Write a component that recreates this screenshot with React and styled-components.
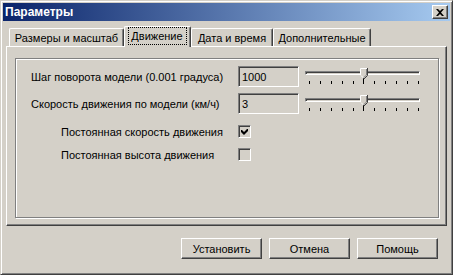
import styled, { createGlobalStyle } from "styled-components";

const GlobalStyle = createGlobalStyle`
  html, body {
    margin: 0;
    padding: 0;
    background: #d4d0c8;
  }
  * {
    box-sizing: border-box;
  }
`;

const SWindow = styled.div`
  width: 453px;
  height: 275px;
  padding: 2px;
  display: flex;
  flex-direction: column;
  background: #d4d0c8;
  border: 1px solid;
  border-color: #d4d0c8 #404040 #404040 #d4d0c8;
  box-shadow: inset 1px 1px 0 #ffffff, inset -1px -1px 0 #808080;
  font-family: "Liberation Sans", Arial, sans-serif;
  font-size: 11px;
  color: #000;
`;

const STitleBar = styled.div`
  height: 18px;
  display: flex;
  align-items: center;
  justify-content: space-between;
  padding: 0 2px 0 2px;
  background: linear-gradient(90deg, #0a246a 0%, #a6caf0 100%);
`;

const STitle = styled.span`
  color: #fff;
  font-weight: bold;
  font-size: 12px;
`;

const SCloseButton = styled.div`
  width: 16px;
  height: 14px;
  display: flex;
  align-items: center;
  justify-content: center;
  background: #d4d0c8;
  border: 1px solid;
  border-color: #ffffff #404040 #404040 #ffffff;
  box-shadow: inset -1px -1px 0 #808080;
`;

const SBody = styled.div`
  flex: 1;
  padding: 5px 3px 0 3px;
  display: flex;
  flex-direction: column;
`;

const STabStrip = styled.div`
  height: 20px;
  display: flex;
  align-items: flex-end;
  padding-left: 3px;
  position: relative;
  z-index: 1;
`;

const STab = styled.div`
  width: ${(p) => p.$w}px;
  height: ${(p) => (p.$active ? 21 : 18)}px;
  margin-bottom: ${(p) => (p.$active ? -1 : 0)}px;
  display: flex;
  align-items: center;
  justify-content: center;
  background: #d4d0c8;
  border-top: 1px solid #ffffff;
  border-left: 1px solid #ffffff;
  border-right: 1px solid #404040;
  border-radius: 2px 2px 0 0;
  box-shadow: inset -1px 0 0 #808080;
  white-space: nowrap;
  padding-bottom: ${(p) => (p.$active ? 2 : 0)}px;
`;

const SFocus = styled.span`
  outline: 1px dotted #000;
  padding: 2px 3px 2px 2px;
`;

const SPanel = styled.div`
  height: 180px;
  padding: 11px 7px 7px 8px;
  border: 1px solid;
  border-color: #ffffff #404040 #404040 #ffffff;
  box-shadow: inset -1px -1px 0 #808080;
  display: flex;
`;

const SGroup = styled.div`
  flex: 1;
  padding: 7px 0 0 15px;
  border: 1px solid #808080;
  box-shadow: inset 1px 1px 0 #ffffff, 1px 1px 0 #ffffff;
  display: flex;
  flex-direction: column;
`;

const SRow = styled.div`
  display: flex;
  align-items: ${(p) => (p.$top ? "flex-start" : "center")};
  height: ${(p) => p.$h}px;
  margin-top: ${(p) => p.$mt || 0}px;
`;

const SLabel = styled.div`
  width: 207px;
  padding-left: ${(p) => p.$indent || 0}px;
  white-space: nowrap;
  align-self: center;
`;

const SEdit = styled.div`
  width: 61px;
  height: 21px;
  padding: 2px 3px;
  display: flex;
  align-items: center;
  background: #d4d0c8;
  border: 1px solid;
  border-color: #808080 #ffffff #ffffff #808080;
  box-shadow: inset 1px 1px 0 #404040, inset -1px -1px 0 #d4d0c8;
`;

const SSlider = styled.div`
  width: 115px;
  height: 21px;
  margin-left: 6px;
  padding-top: 5px;
  position: relative;
  align-self: flex-start;
`;

const SChannel = styled.div`
  height: 4px;
  border: 1px solid;
  border-color: #808080 #ffffff #ffffff #808080;
  box-shadow: inset 1px 1px 0 #404040;
`;

const SThumb = styled.svg`
  position: absolute;
  left: 55px;
  top: 2px;
`;

const STicks = styled.div`
  display: flex;
  justify-content: space-between;
  align-items: flex-end;
  padding: 0 1px 0 4px;
  margin-top: 6px;
  height: 3px;
`;

const STick = styled.div`
  width: 1px;
  height: ${(p) => (p.$major ? 7 : 3)}px;
  background: #000;
`;

const SCheck = styled.div`
  width: 13px;
  height: 13px;
  display: flex;
  align-items: center;
  justify-content: center;
  background: #d4d0c8;
  border: 1px solid;
  border-color: #808080 #ffffff #ffffff #808080;
  box-shadow: inset 1px 1px 0 #404040, inset -1px -1px 0 #d4d0c8;
`;

const SFooter = styled.div`
  display: flex;
  justify-content: flex-end;
  gap: 7px;
  padding: 12px 9px 0 0;
`;

const SButton = styled.div`
  width: 81px;
  height: 21px;
  display: flex;
  align-items: center;
  justify-content: center;
  border: 1px solid;
  border-color: #ffffff #404040 #404040 #ffffff;
  box-shadow: inset -1px -1px 0 #808080;
`;

const tabs = [
  { title: "Размеры и масштаб", w: 115 },
  { title: "Движение", w: 67, active: true },
  { title: "Дата и время", w: 82 },
  { title: "Дополнительные", w: 98 },
];

const Slider = () => (
  <SSlider>
    <SChannel />
    <STicks>
      {Array.from({ length: 11 }).map((_, i) => (
        <STick key={i} $major={i === 5} />
      ))}
    </STicks>
    <SThumb width="8" height="11" viewBox="0 0 8 11">
      <polygon points="0,0 7,0 7,7 3.5,10.5 0,7" fill="#d4d0c8" />
      <polyline points="0.5,7 0.5,0.5 7,0.5" fill="none" stroke="#fff" />
      <polyline points="1,7.5 3.5,10" fill="none" stroke="#fff" />
      <polyline points="7.5,0 7.5,7.5 4,11" fill="none" stroke="#404040" />
      <polyline points="6.5,1 6.5,7 3.5,9.8" fill="none" stroke="#808080" />
    </SThumb>
  </SSlider>
);

const CheckMark = () => (
  <svg width="7" height="7" viewBox="0 0 7 7">
    <path d="M0 2h1l2 2 3-3h1v2L3 7 0 4z" fill="#000" />
  </svg>
);

const App = () => {
  return (
    <>
      <GlobalStyle />
      <SWindow>
        <STitleBar>
          <STitle>Параметры</STitle>
          <SCloseButton>
            <svg width="8" height="7" viewBox="0 0 8 7">
              <path d="M0 0h2l2 2 2-2h2L5 3.5 8 7H6L4 5 2 7H0l3-3.5z" fill="#000" />
            </svg>
          </SCloseButton>
        </STitleBar>
        <SBody>
          <STabStrip>
            {tabs.map((t) => (
              <STab key={t.title} $w={t.w} $active={t.active}>
                {t.active ? <SFocus>{t.title}</SFocus> : t.title}
              </STab>
            ))}
          </STabStrip>
          <SPanel>
            <SGroup>
              <SRow $h={21} $top>
                <SLabel>Шаг поворота модели (0.001 градуса)</SLabel>
                <SEdit>1000</SEdit>
                <Slider />
              </SRow>
              <SRow $h={21} $mt={6} $top>
                <SLabel>Скорость движения по модели (км/ч)</SLabel>
                <SEdit>3</SEdit>
                <Slider />
              </SRow>
              <SRow $h={13} $mt={11}>
                <SLabel $indent={30}>Постоянная скорость движения</SLabel>
                <SCheck>
                  <CheckMark />
                </SCheck>
              </SRow>
              <SRow $h={13} $mt={10}>
                <SLabel $indent={30}>Постоянная высота движения</SLabel>
                <SCheck />
              </SRow>
            </SGroup>
          </SPanel>
          <SFooter>
            <SButton>Установить</SButton>
            <SButton>Отмена</SButton>
            <SButton>Помощь</SButton>
          </SFooter>
        </SBody>
      </SWindow>
    </>
  );
};

export default App;
